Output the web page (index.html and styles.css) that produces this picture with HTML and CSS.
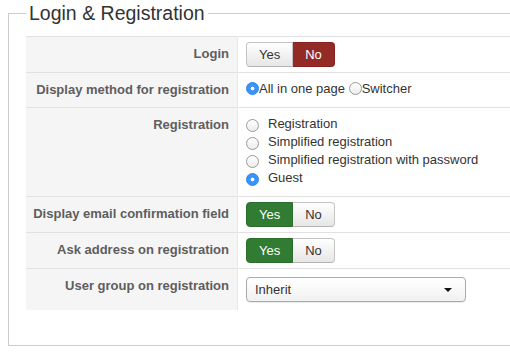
FILE: index.html
```html
<!DOCTYPE html>
<html>
<head>
    <title>Login &amp; Registration</title>
    <link rel="stylesheet" href="styles.css">
</head>
<body>
    <fieldset class="settings">
        <legend>Login &amp; Registration</legend>
        <table class="options">
            <tr>
                <td class="label">Login</td>
                <td class="controls">
                    <div class="yesno">
                        <span class="btn">Yes</span>
                        <span class="btn active-no">No</span>
                    </div>
                </td>
            </tr>
            <tr>
                <td class="label">Display method for registration</td>
                <td class="controls">
                    <div class="radios inline">
                        <label><input type="radio" name="display" checked>All in one page</label>
                        <label><input type="radio" name="display">Switcher</label>
                    </div>
                </td>
            </tr>
            <tr>
                <td class="label">Registration</td>
                <td class="controls">
                    <div class="radios stacked">
                        <label><input type="radio" name="reg">Registration</label>
                        <label><input type="radio" name="reg">Simplified registration</label>
                        <label><input type="radio" name="reg">Simplified registration with password</label>
                        <label><input type="radio" name="reg" checked>Guest</label>
                    </div>
                </td>
            </tr>
            <tr>
                <td class="label">Display email confirmation field</td>
                <td class="controls">
                    <div class="yesno">
                        <span class="btn active-yes">Yes</span>
                        <span class="btn">No</span>
                    </div>
                </td>
            </tr>
            <tr>
                <td class="label">Ask address on registration</td>
                <td class="controls">
                    <div class="yesno">
                        <span class="btn active-yes">Yes</span>
                        <span class="btn">No</span>
                    </div>
                </td>
            </tr>
            <tr class="last">
                <td class="label">User group on registration</td>
                <td class="controls">
                    <div class="select">
                        <span>Inherit</span>
                        <span class="caret"></span>
                    </div>
                </td>
            </tr>
        </table>
    </fieldset>
</body>
</html>
```

FILE: styles.css
```css
body {
    font-family: "Liberation Sans", Arial, sans-serif;
    font-size: 13px;
    color: #333;
    margin: 0;
    padding: 0 0 0 8px;
    background-color: #fff;
}
.settings {
    box-sizing: border-box;
    width: 502px;
    min-width: 0;
    margin: 0;
    padding: 10px 0 35px 17px;
    border: 1px solid #ccc;
    border-right: none;
}
.settings legend {
    font-size: 19.5px;
    line-height: 26px;
    font-weight: normal;
    color: #333;
    padding: 0 3px;
    margin: 0;
}
.options {
    width: 100%;
    border-collapse: collapse;
}
.options td {
    border-top: 1px solid #e1e1e1;
    vertical-align: top;
    padding: 0;
}
.options td.label {
    width: 203px;
    background-color: #f5f5f5;
    border-right: 1px solid #e8e8e8;
    padding: 8px 8px 0 0;
    text-align: right;
    font-weight: bold;
    color: #5e5e5e;
    line-height: 18px;
}
.options td.controls {
    padding: 5px 8px;
}
.yesno {
    display: inline-flex;
}
.btn {
    display: block;
    height: 23px;
    line-height: 23px;
    padding: 0 12px;
    border: 1px solid #c4c4c4;
    border-bottom-color: #b3b3b3;
    background: linear-gradient(#ffffff, #e6e6e6);
    color: #333;
    font-size: 13px;
}
.btn:first-child {
    border-radius: 4px 0 0 4px;
}
.btn:last-child {
    border-radius: 0 4px 4px 0;
    border-left: none;
}
.btn.active-no {
    background: #942a25;
    border-color: #86231f;
    color: #fff;
}
.btn.active-yes {
    background: #317b32;
    border-color: #2b6e2c;
    color: #fff;
}
.radios {
    padding: 2px 0 4px;
    line-height: 18px;
}
.radios label {
    color: #333;
}
.radios.stacked label {
    display: block;
}
.radios input {
    -webkit-appearance: none;
    appearance: none;
    width: 13px;
    height: 13px;
    margin: 0;
    border: 1px solid #9a9a9a;
    border-radius: 50%;
    background: linear-gradient(#ffffff, #ececec);
    box-sizing: border-box;
}
.radios.inline input {
    vertical-align: -2px;
}
.radios.stacked input {
    vertical-align: -4px;
    margin: 0 9px 0 0;
}
.radios input:checked {
    border-color: #2f86f0;
    background: radial-gradient(circle, #ffffff 0, #ffffff 1.6px, #3b93f7 2.2px);
}
.select {
    display: flex;
    align-items: center;
    justify-content: space-between;
    box-sizing: border-box;
    width: 220px;
    height: 25px;
    margin: 3px 0;
    padding: 0 13px 0 8px;
    border: 1px solid #aaa;
    border-radius: 4px;
    background: linear-gradient(#ffffff, #f1f1f1);
    box-shadow: 0 1px 1px rgba(0, 0, 0, 0.08);
    color: #333;
}
.select .caret {
    width: 0;
    height: 0;
    border-left: 4px solid transparent;
    border-right: 4px solid transparent;
    border-top: 4px solid #111;
}
```
